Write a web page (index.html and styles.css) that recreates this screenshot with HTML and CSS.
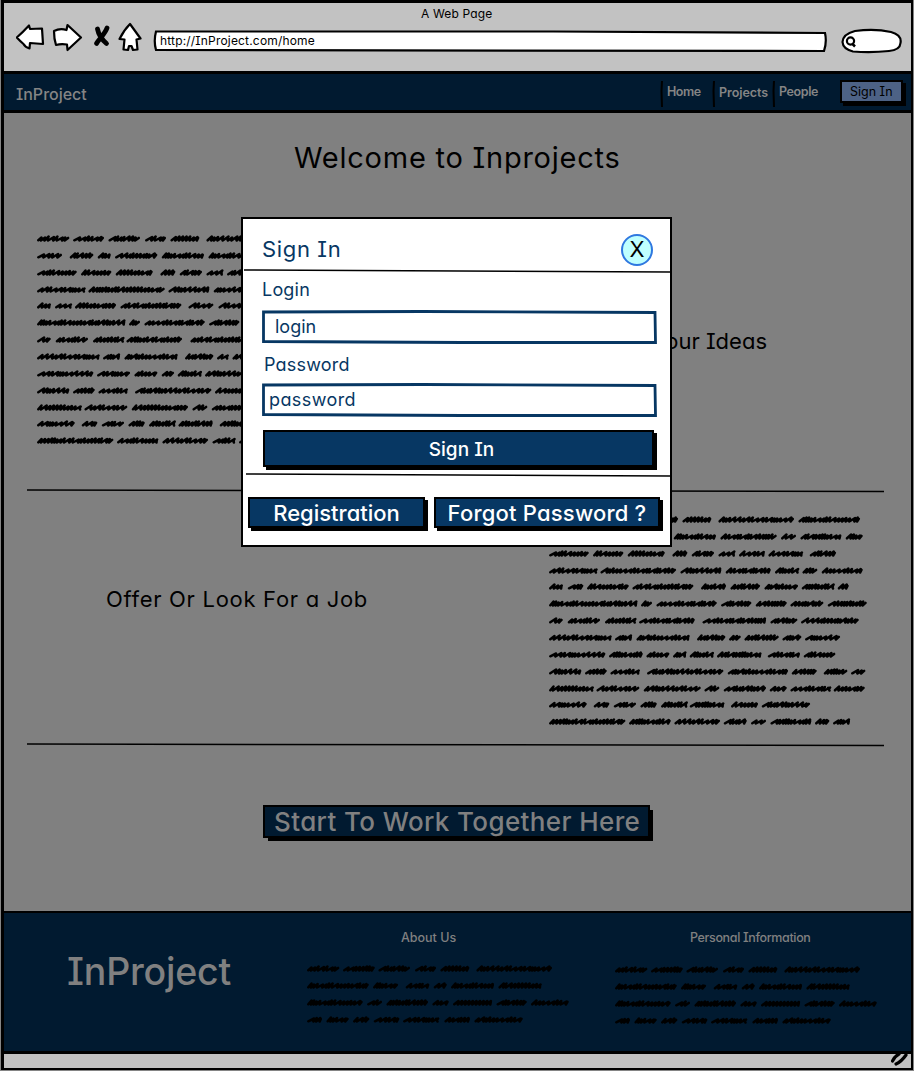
FILE: index.html
```html
<!DOCTYPE html>
<html lang="en">
<head>
<meta charset="utf-8">
<title>A Web Page</title>
<link rel="stylesheet" href="styles.css">
</head>
<body>
<div class="browser">
  <header class="chrome">
    <div class="chrome-title">A Web Page</div>
    <div class="toolbar">
      <svg class="tools" width="126" height="32" viewBox="0 0 126 32">
        <g fill="#fff" stroke="#000" stroke-width="2.2" stroke-linejoin="round">
          <path d="M.8 15.500Q7 10 13 3.500L14 7L26 6.500L27 22L14 21L13.500 26.500Q9 25 7.500 22Q4 19 .8 15.500Z"/>
          <path d="M38 9Q44 6 50.500 8L51.500 3L65 15.500L51.500 28L51 22.500Q45 21.500 40 23Q38 17 38 9Z"/>
          <path d="M114 2L124.500 16.500L120.500 17.500L121.500 27.500L117 28L115.500 24H113L112 28L107.500 27.500L108.500 17.500L103.500 17Q108 8 114 2Z"/>
        </g>
        <path d="M81.500 7Q83 15 90.500 21.500M91 6C89 12 83 17 80.500 21.500" fill="none" stroke="#000" stroke-width="4.800" stroke-linecap="round"/>
      </svg>
      <div class="address">
        <svg class="frame" viewBox="0 0 674 22"><path d="M3 1.500L400 1.500L672 3Q674 12 671 21L3 20Q.5 11 3 1.500Z" fill="#fff" stroke="#000" stroke-width="2.200"/></svg>
        <span>http://InProject.com/home</span>
      </div>
      <svg class="search" width="62" height="26" viewBox="0 0 62 26">
        <path d="M14 3Q34 .5 50 4Q61 7 59.500 15Q59 22 48 23Q30 25 12 23.500Q2 21 1.500 14Q2 6 14 3Z" fill="#fff" stroke="#000" stroke-width="2.200"/>
        <circle cx="9.500" cy="13" r="3.600" fill="none" stroke="#000" stroke-width="2.200"/><path d="M11 15.500L14 18.500" stroke="#000" stroke-width="2.500"/>
      </svg>
    </div>
  </header>

  <nav class="navbar">
    <div class="brand">InProject</div>
    <svg class="sep" viewBox="0 0 4 26"><path d="M2 0L1.500 10L2 26" fill="none" stroke="#000" stroke-width="2"/></svg>
    <a class="link home">Home</a>
    <svg class="sep" viewBox="0 0 4 26"><path d="M2 0L1.500 10L2 26" fill="none" stroke="#000" stroke-width="2"/></svg>
    <a class="link projects">Projects</a>
    <svg class="sep" viewBox="0 0 4 26"><path d="M2 0L1.500 10L2 26" fill="none" stroke="#000" stroke-width="2"/></svg>
    <a class="link people">People</a>
    <a class="nav-button">Sign In</a>
  </nav>

  <main class="page">
    <h1 class="hero">Welcome to Inprojects</h1>
    <section class="row row-ideas">
      <svg class="scribble" data-block="left" width="210" height="216"></svg>
      <h2 class="ideas">our Ideas</h2>
    </section>
    <svg class="rule" viewBox="0 0 857 4"><path d="M0 1L857 2.500" stroke="#000" stroke-width="1.500"/></svg>
    <section class="row row-job">
      <h2 class="job">Offer Or Look For a Job</h2>
      <svg class="scribble" data-block="right" width="322" height="216"></svg>
    </section>
    <svg class="rule" viewBox="0 0 857 4"><path d="M0 1L857 2.500" stroke="#000" stroke-width="1.500"/></svg>
    <div class="start">Start To Work Together Here</div>
  </main>

  <footer class="footer">
    <div class="footer-brand">InProject</div>
    <div class="footer-col about">
      <h3>About Us</h3>
      <svg class="scribble" data-block="foot" width="270" height="66"></svg>
    </div>
    <div class="footer-col personal">
      <h3>Personal Information</h3>
      <svg class="scribble" data-block="foot" width="270" height="66"></svg>
    </div>
  </footer>
  <div class="status">
    <svg class="grip" width="20" height="14" viewBox="0 0 20 14"><path d="M1.500 7Q4 2 8 0M5 10Q10 8 15 1" fill="none" stroke="#000" stroke-width="3.200" stroke-linecap="round"/></svg>
  </div>

  <div class="modal">
    <div class="modal-head">
      <span class="modal-title">Sign In</span>
      <span class="close">X</span>
    </div>
    <svg class="modal-rule" viewBox="0 0 427 4"><path d="M1 1L427 3" stroke="#000" stroke-width="1.600"/></svg>
    <label class="label login-label">Login</label>
    <div class="field login"><svg class="frame" viewBox="0 0 395 34"><path d="M1.500 2L160 1.500L393 2.500L393.500 32.500L200 32.500L1.500 31.500Z" fill="#fff" stroke="#073763" stroke-width="2.800"/></svg><span>login</span></div>
    <label class="label pass-label">Password</label>
    <div class="field pass"><svg class="frame" viewBox="0 0 395 34"><path d="M1.500 2L160 1.500L393 2.500L393.500 32.500L200 32.500L1.500 31.500Z" fill="#fff" stroke="#073763" stroke-width="2.800"/></svg><span>password</span></div>
    <div class="button submit">Sign In</div>
    <svg class="modal-rule second" viewBox="0 0 427 4"><path d="M3 1L427 3" stroke="#000" stroke-width="1.600"/></svg>
    <div class="modal-foot">
      <div class="button register">Registration</div>
      <div class="button forgot">Forgot Password ?</div>
    </div>
  </div>
</div>
<script src="scribble.js"></script>
</body>
</html>
```
FILE: styles.css
```css
* { box-sizing: border-box; }
body {
  margin: 0;
  background: #858585;
  color: #000;
  font-family: Inter, "Open Sans", sans-serif;
  font-feature-settings: "cv08", "cv11";
  white-space: nowrap;
}
h1, h2, h3 { margin: 0; font-weight: 400; }
svg { display: block; flex: none; }
.browser {
  position: relative;
  width: 912px;
  height: 1070px;
  margin-left: 1px;
  border: 3px solid #000;
  border-right-width: 2px;
  display: flex;
  flex-direction: column;
  background: #808080;
}
.chrome { height: 73px; flex: none; margin-top: -2px; border-top: 2px solid #000; border-bottom: 3px solid #000; background: #c2c2c2; }
.chrome-title { height: 20px; line-height: 22px; padding-left: 417px; font-size: 12px; letter-spacing: .15px; }
.toolbar { display: flex; padding-left: 12px; }
.tools { margin-top: -1px; }
.address { position: relative; width: 674px; height: 22px; margin: 7px 0 0 11px; padding-left: 7px; font-size: 12px; line-height: 21px; letter-spacing: .18px; }
.frame { position: absolute; inset: 0; width: 100%; height: 100%; }
.address span, .field span { position: relative; }
.search { margin: 5px 0 0 14px; }

.navbar { height: 39px; flex: none; display: flex; background: #011a30; border-bottom: 3px solid #000; color: #858585; }
.brand { width: 656px; padding-left: 12px; font-size: 16px; font-weight: 500; line-height: 40px; }
.sep { width: 4px; height: 26px; margin-top: 7px; }
.link { font-size: 12.500px; font-weight: 600; line-height: 35px; letter-spacing: -.45px; }
.home { width: 48px; padding-left: 3px; }
.projects { width: 56px; padding-left: 3px; line-height: 37px; letter-spacing: -.05px; }
.people { width: 64px; padding-left: 3px; letter-spacing: -.4px; }
.nav-button { width: 63px; height: 23px; margin-top: 6px; border: 2px solid #000; background: #4d6285; box-shadow: 3px 3px 0 #000; color: #000; font-size: 12.500px; line-height: 20px; padding-left: 8px; }

.page { height: 798px; flex: none; }
.hero { padding: 25px 0 0 290px; font-size: 29px; line-height: 40px; height: 120px; letter-spacing: .75px; }
.row { display: flex; }
.row-ideas { height: 256px; padding-left: 32px; }
.ideas { flex: 1; padding: 92px 144px 0 0; text-align: right; font-size: 22px; line-height: 32px; }
.rule { width: 857px; height: 4px; margin-left: 23px; }
.row-job { height: 250px; padding-left: 102px; }
.job { width: 442px; padding-top: 90px; font-size: 22px; line-height: 32px; letter-spacing: .7px; }
.row-job .scribble { margin-top: 21px; }
.start { width: 387px; height: 33px; margin: 58px 0 0 259px; background: #011a30; border: 2px solid #000; box-shadow: 4px 4px 0 -1px #000; color: #808080; font-size: 26px; font-weight: 500; line-height: 30px; letter-spacing: .38px; padding-left: 9px; }

.footer { height: 143px; flex: none; display: flex; background: #011a30; border: solid #000; border-width: 2px 0 3px; color: #808080; }
.footer-brand { width: 302px; padding: 33px 0 0 63px; font-size: 37.500px; font-weight: 500; line-height: 52px; letter-spacing: -.2px; }
.footer-col { width: 308px; }
.footer h3 { height: 50px; font-size: 12.500px; font-weight: 500; line-height: 50px; padding-left: 98px; }
.footer .personal h3 { padding-left: 83px; letter-spacing: -.35px; }
.about .scribble { margin: 0 0 0 3px; }
.personal .scribble { margin: 1px 0 0 7px; }
.status { flex: 1; display: flex; justify-content: flex-end; background: #c2c2c2; }

.modal { position: absolute; left: 237px; top: 214px; width: 431px; height: 330px; background: #fff; border: 2px solid #000; color: #073763; }
.modal-head { display: flex; justify-content: space-between; height: 50px; padding: 14px 17px 0 19px; }
.modal-title { font-size: 22px; line-height: 32px; letter-spacing: .65px; }
.close { width: 32px; height: 32px; margin-top: 1px; border: 2px solid #2f78e0; border-radius: 50%; background: #bfffff; color: #000; font-size: 22px; line-height: 27px; text-align: center; }
.modal-rule { width: 427px; height: 4px; }
.label { display: block; padding-left: 19px; font-size: 18px; line-height: 33px; height: 37px; letter-spacing: .2px; }
.field { position: relative; width: 395px; height: 34px; margin-left: 19px; padding-left: 13px; font-size: 18px; line-height: 34px; }
.pass-label { padding-left: 21px; height: 39px; line-height: 42px; }
.pass { padding-left: 7px; letter-spacing: .4px; }
.button { border: 2px solid #000; background: #073763; color: #fff; font-weight: 500; text-align: center; box-shadow: 3px 3px 0 #000; }
.submit { width: 391px; height: 37px; margin: 13px 0 0 20px; font-size: 19px; line-height: 36px; padding-left: 6px; }
.second { margin-top: 6px; }
.modal-foot { display: flex; gap: 9px; padding: 20px 0 0 5px; font-size: 22px; line-height: 28px; }
.register { width: 177px; height: 31px; }
.forgot { width: 226px; height: 31px; letter-spacing: .2px; }
```
FILE: scribble.js
```js
// Placeholder copy: each row lists word start/end pairs in thirds of a pixel.
const blocks = {
  left: [
    '0-96,108-200,214-308,324-386,400-486,508-734', '0-74,98-168,182-220,234-360,374-500,514-680',
    '0-118,132-222,236-346,370-414,428-494,508-556,570-640', '0-140,154-382,394-516,530-660',
    '0-40,54-102,114-236,250-432,454-528,544-640', '0-264,276-308,322-502,516-606',
    '0-40,56-152,168-256,268-434,460-640', '0-186,198-248,262-420,444-528,540-572,586-660',
    '0-168,180-278,292-360,374-410,422-492,504-640', '0-96,108-172,184-270,294-522,534-640',
    '0-130,142-270,284-452,466-510,524-640', '0-112,134-180,194-260,274-322,336-412,424-526,548-640',
    '0-228,240-362,376-512,526-592,606-660'],
  right: [
    '340-386,400-486,508-734,748-932', '374-500,514-682,696-740,754-876,890-940',
    '0-118,132-222,236-346,370-414,428-494,508-556,570-646,658-760,782-860',
    '0-140,154-380,394-516,530-664,678-746,760-804,818-940',
    '0-40,56-102,114-238,250-432,456-530,544-632,646-746,758-852,866-898',
    '0-264,276-308,322-502,516-606,620-712,724-822,836-952',
    '0-40,56-152,168-256,270-436,460-650,664-744,756-928',
    '0-186,198-248,262-420,444-528,540-574,586-688,700-756,768-872',
    '0-168,180-280,292-360,372-410,422-492,504-636,656-752,764-858',
    '0-96,108-172,184-270,294-522,536-716,728-802,824-894,906-948',
    '0-130,142-270,284-454,466-510,524-650,662-712,724-840,854-946',
    '0-112,134-180,194-260,274-322,336-412,422-524,546-626,638-782',
    '0-228,240-364,376-512,524-592,606-650,664-786,798-840,852-902'],
  foot: [
    '0-96,108-202,214-308,324-386,400-486,508-734', '0-184,198-272,296-366,380-418,432-560,574-702',
    '0-166,180-224,238-362,376-424,438-554,568-658,672-784', '0-44,58-124,138-186,200-276,288-390,412-488,502-646']
};

// One scribbled word: slanted strokes joined by curves, spacing varies with the seed.
function word(x0, x1, y, seed) {
  let x = x0 + 1;
  let d = `M${x.toFixed(1)} ${y + 1.8}`;
  while (x < x1 - 5) {
    seed = (seed * 73 + 41) % 101;
    const step = [2.6, 3.6, 5.2, 3.6][seed % 4];
    const top = y - 2 + (seed % 3) * 0.5;
    const tx = x + step + 0.6;
    d += `L${tx.toFixed(1)} ${top.toFixed(1)}Q${(tx - 1.6).toFixed(1)} ${(y + 1).toFixed(1)} ${(x + step).toFixed(1)} ${(y + 2).toFixed(1)}`;
    x += step;
  }
  return d + `L${(x1 - 1.2).toFixed(1)} ${y - 0.6}`;
}

for (const svg of document.querySelectorAll('.scribble')) {
  let d = '';
  blocks[svg.dataset.block].forEach((row, r) => {
    for (const w of row.split(',')) {
      const [a, b] = w.split('-').map(Number);
      d += word(a / 3 + 4 / 3, b / 3 + 4 / 3, Math.round(r * 16.85) + 5.5, a + b + r);
    }
  });
  svg.innerHTML = `<path d="${d}" fill="none" stroke="#000" stroke-width="2.5" stroke-linejoin="round" stroke-linecap="round"/>`;
}
```
